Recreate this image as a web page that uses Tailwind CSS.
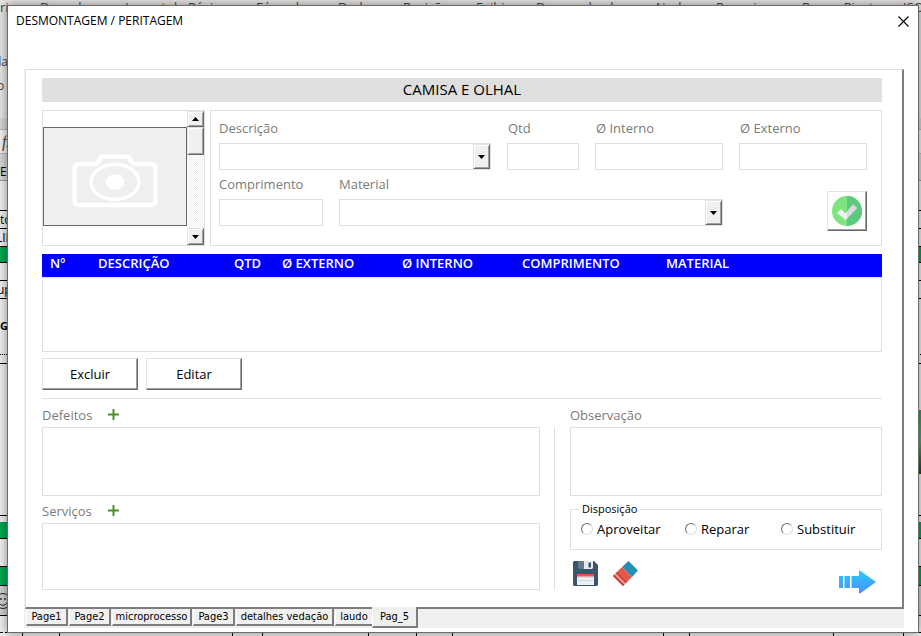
<!DOCTYPE html>
<html lang="pt-BR">
<head>
<meta charset="utf-8">
<title>DESMONTAGEM / PERITAGEM</title>
<script src="https://cdn.jsdelivr.net/npm/@tailwindcss/browser@4"></script>
</head>
<body class="relative min-h-screen overflow-hidden bg-[#f0f0f0] font-['Open_Sans','Noto_Sans',sans-serif] text-[13px] leading-[18px] text-black">

<!-- Spreadsheet behind the dialog -->
<div class="absolute inset-0 flex flex-col overflow-hidden text-[12px]" aria-hidden="true">
  <div class="h-[118px] shrink-0 bg-[#e6e5e4] text-[#444]">
    <div class="flex h-[50px] whitespace-nowrap text-[13px] leading-[14px]">
      <span class="w-10 shrink-0">rir</span>
      <span class="w-[85px] shrink-0">Desenhar</span>
      <span class="w-[131px] shrink-0">Layout da Página</span>
      <span class="w-[82px] shrink-0">Fórmulas</span>
      <span class="w-[65px] shrink-0">Dados</span>
      <span class="w-[73px] shrink-0">Revisão</span>
      <span class="w-[60px] shrink-0">Exibir</span>
      <span class="w-[118px] shrink-0">Desenvolvedor</span>
      <span class="w-[62px] shrink-0">Ajuda</span>
      <span class="w-[86px] shrink-0">Pesquisar</span>
      <span class="w-[101px] shrink-0">Power Pivot</span>
      <span>ISO</span>
    </div>
    <div class="flex h-6 leading-6"><span class="-ml-[6px]">da</span></div>
    <div class="flex h-6 leading-6"><span class="-ml-[3px]">o</span></div>
  </div>
  <div class="h-3 shrink-0 border-b border-[#b5b5b5] bg-[#d6d6d6]"></div>
  <div class="h-6 shrink-0 border-b border-[#b5b5b5] bg-[#f3f3f3] pl-[2px] font-['Liberation_Serif',serif] text-base leading-6 italic text-[#444]">fx</div>
  <div class="h-[27px] shrink-0 border-b border-[#999] bg-[#d8d8d8] pt-[9px]">E</div>
  <div class="h-[30px] shrink-0 border-b border-black"></div>
  <div class="h-[18px] shrink-0 border-b border-black leading-[17px]">to</div>
  <div class="flex h-[18px] shrink-0 border-b border-black leading-[17px]"><span class="-ml-1">LIN</span></div>
  <div class="h-4 shrink-0 border-b border-black bg-[#00a651]"></div>
  <div class="h-[18px] shrink-0 border-b border-black"></div>
  <div class="flex h-[18px] shrink-0 border-b border-black leading-[17px]"><span class="-ml-[3px]">up</span></div>
  <div class="h-14 shrink-0 border-b border-dotted border-black pt-[18px] text-[11px] font-bold">G</div>
  <div class="h-[9px] shrink-0 border-b border-black"></div>
  <div class="flex h-[152px] shrink-0 items-end justify-end border-b border-black pb-[41px]"><div class="h-16 w-1 bg-linear-to-b from-[#2f9e4f] via-[#3cb45f] to-[#0c4a22]"></div></div>
  <div class="h-[6px] shrink-0"></div>
  <div class="h-[17px] shrink-0 border-b border-black bg-[#00a651]"></div>
  <div class="h-7 shrink-0 border-b border-black"></div>
  <div class="h-[19px] shrink-0 border-b border-black bg-[#00a651]"></div>
  <div class="h-[30px] shrink-0 border-b border-black bg-[#d0d0d0] pt-[6px]">
    <svg class="-ml-[6px] h-[18px] w-[18px]" viewBox="0 0 18 18" fill="none" stroke="#222" stroke-width="1"><circle cx="9" cy="9" r="7.5"/><path d="M5 11c2 3 6 3 8 0"/><circle cx="7" cy="7" r=".6"/><circle cx="11" cy="7" r=".6"/></svg>
  </div>
  <div class="h-[17px] shrink-0 border-b border-dashed border-black"></div>
  <div class="flex h-1 shrink-0">
    <div class="w-[23px] border-r border-black"></div><div class="w-[37px] border-r border-black"></div><div class="w-[173px] border-r border-black"></div><div class="w-[30px] border-r border-black"></div><div class="w-[106px] border-r border-black"></div><div class="w-12 border-r border-black"></div><div class="w-[36px] border-r border-black"></div><div class="w-[211px] border-r border-black"></div><div class="w-[26px] border-r border-black"></div><div class="w-[144px] border-r border-black"></div><div class="w-[70px] border-r border-black"></div>
  </div>
</div>

<main role="dialog" aria-labelledby="dlg-title" class="relative mt-[5px] mr-[2px] ml-[7px] border border-[#6b6b6b] bg-white pb-1 shadow-[0_0_10px_rgba(0,0,0,0.45)]">
  <header class="flex h-[30px] items-center justify-between pr-[9px] pl-2">
    <h1 id="dlg-title" class="text-[12px]">DESMONTAGEM / PERITAGEM</h1>
    <button type="button" aria-label="Fechar" class="size-[11px]">
      <svg class="block size-[11px]" viewBox="0 0 11 11" stroke="#000" stroke-width="1.1"><path d="M.5.5l10 10M10.500.5l-10 10"/></svg>
    </button>
  </header>

  <div class="mt-[33px] mr-[14px] ml-4 bg-[#f0f0f0]">
    <section class="ml-px border-t border-r-2 border-b-2 border-l border-t-[#dfdfdf] border-r-[#7d7d7d] border-b-[#7d7d7d] border-l-[#dfdfdf] bg-white pt-2 pr-5 pb-[17px] pl-4">
      <h2 class="bg-[#dfdfdf] pb-[2px] text-center text-[15px] leading-[22px]">CAMISA E OLHAL</h2>

      <div class="mt-2 flex gap-[5px]">
        <div class="flex w-[163px] shrink-0 border border-[#dfdfdf]">
          <div class="w-36 pt-4">
            <div class="flex h-[99px] items-center justify-center border border-[#696969] bg-[#efefef]">
              <svg class="mt-2 h-[54px] w-[86px]" viewBox="0 0 86 54" fill="none" stroke="#fff">
                <path d="M7 10h15c3 0 4-1 5-3l1-2c0-2 2-2.500 4-2.500h22c2 0 4 .5 4 2.500l1 2c1 2 2 3 5 3h15c3 0 4.500 2 4.500 4.500v32c0 3-1.500 4.500-4.500 4.500H7c-3 0-4.500-1.500-4.500-4.500v-32C2.500 12 4 10 7 10z" stroke-width="4.500"/>
                <ellipse cx="43" cy="28" rx="24" ry="17.500" stroke-width="3.500"/>
                <ellipse cx="43" cy="28" rx="9.500" ry="7.500" fill="#fff" stroke="none"/>
              </svg>
            </div>
          </div>
          <div class="flex w-[17px] flex-col bg-[repeating-conic-gradient(#fff_0_25%,#f0f0f0_0_50%)] bg-[size:2px_2px]">
            <button type="button" aria-label="Rolar para cima" class="flex h-4 items-center justify-center border border-t-[#e3e3e3] border-r-[#696969] border-b-[#696969] border-l-[#e3e3e3] bg-[#f0f0f0] shadow-[inset_1px_1px_#fff,inset_-1px_-1px_#a0a0a0]"><svg class="h-1 w-[7px]" viewBox="0 0 7 4"><path d="M3.500 0L7 4H0z"/></svg></button>
            <div class="h-7 border border-t-[#e3e3e3] border-r-[#696969] border-b-[#696969] border-l-[#e3e3e3] bg-[#f0f0f0] shadow-[inset_1px_1px_#fff,inset_-1px_-1px_#a0a0a0]"></div>
            <div class="grow"></div>
            <button type="button" aria-label="Rolar para baixo" class="flex h-[17px] items-center justify-center border border-t-[#e3e3e3] border-r-[#696969] border-b-[#696969] border-l-[#e3e3e3] bg-[#f0f0f0] shadow-[inset_1px_1px_#fff,inset_-1px_-1px_#a0a0a0]"><svg class="h-1 w-[7px]" viewBox="0 0 7 4"><path d="M0 0h7L3.500 4z"/></svg></button>
          </div>
        </div>

        <div class="grow border border-[#dfdfdf] pt-2 pr-[14px] pb-[14px] pl-2 text-[#7b7b7b]">
          <div class="flex gap-4">
            <div class="grow">
              <label for="descricao" class="block">Descrição</label>
              <div class="relative mt-[6px]">
                <select id="descricao" class="block h-[27px] w-full appearance-none border border-[#dfdfdf] bg-white px-1 text-black"><option></option></select>
                <span class="pointer-events-none absolute top-px right-px flex h-[25px] w-[17px] items-center justify-center border border-t-[#e3e3e3] border-r-[#696969] border-b-[#696969] border-l-[#e3e3e3] bg-[#f0f0f0] shadow-[inset_1px_1px_#fff,inset_-1px_-1px_#a0a0a0]"><svg class="h-1 w-[7px]" viewBox="0 0 7 4"><path d="M0 0h7L3.500 4z"/></svg></span>
              </div>
            </div>
            <div class="w-[72px]">
              <label for="qtd" class="block pl-px">Qtd</label>
              <input id="qtd" type="text" class="mt-[6px] block h-[27px] w-full border border-[#dfdfdf] px-1 text-black">
            </div>
            <div class="w-32">
              <label for="interno" class="block pl-px">Ø Interno</label>
              <input id="interno" type="text" class="mt-[6px] block h-[27px] w-full border border-[#dfdfdf] px-1 text-black">
            </div>
            <div class="w-32">
              <label for="externo" class="block pl-px">Ø Externo</label>
              <input id="externo" type="text" class="mt-[6px] block h-[27px] w-full border border-[#dfdfdf] px-1 text-black">
            </div>
          </div>
          <div class="mt-[5px] flex gap-4">
            <div class="w-[104px]">
              <label for="comprimento" class="block">Comprimento</label>
              <input id="comprimento" type="text" class="mt-[6px] block h-[27px] w-full border border-[#dfdfdf] px-1 text-black">
            </div>
            <div class="grow">
              <label for="material" class="block">Material</label>
              <div class="relative mt-[6px]">
                <select id="material" class="block h-[27px] w-full appearance-none border border-[#dfdfdf] bg-white px-1 text-black"><option></option></select>
                <span class="pointer-events-none absolute top-px right-px flex h-[25px] w-[17px] items-center justify-center border border-t-[#e3e3e3] border-r-[#696969] border-b-[#696969] border-l-[#e3e3e3] bg-[#f0f0f0] shadow-[inset_1px_1px_#fff,inset_-1px_-1px_#a0a0a0]"><svg class="h-1 w-[7px]" viewBox="0 0 7 4"><path d="M0 0h7L3.500 4z"/></svg></span>
              </div>
            </div>
            <div class="flex w-32 justify-end pt-4">
              <button type="button" aria-label="Confirmar" class="flex size-10 items-center justify-center border border-t-[#e3e3e3] border-r-[#696969] border-b-[#696969] border-l-[#e3e3e3] bg-white shadow-[inset_-1px_-1px_#a0a0a0]">
                <svg class="size-[30px]" viewBox="0 0 30 30"><circle cx="15" cy="15" r="15" fill="#7ee57e"/><path d="M15 0a15 15 0 010 30z" fill="#5dc97f"/><path d="M5 17l4-4 4.500 4.500L21 8.500l4 3.500-11.500 12z" fill="#f1f0f5"/><path d="M15 15.700L21 8.500l4 3.500-10 10.400z" fill="#d9dade"/></svg>
              </button>
            </div>
          </div>
        </div>
      </div>

      <table class="mt-2 w-full table-fixed border-separate border-spacing-0 text-left">
        <colgroup><col class="w-12"><col class="w-[136px]"><col class="w-12"><col class="w-[120px]"><col class="w-[120px]"><col class="w-36"><col></colgroup>
        <thead class="bg-[#0000ff] text-white">
          <tr class="h-[23px]">
            <th class="p-0 pb-[5px] pl-2 font-semibold">Nº</th>
            <th class="p-0 pb-[5px] pl-2 font-semibold">DESCRIÇÃO</th>
            <th class="p-0 pb-[5px] pl-2 font-semibold">QTD</th>
            <th class="p-0 pb-[5px] pl-2 font-semibold">Ø EXTERNO</th>
            <th class="p-0 pb-[5px] pl-2 font-semibold">Ø INTERNO</th>
            <th class="p-0 pb-[5px] pl-2 font-semibold">COMPRIMENTO</th>
            <th class="p-0 pb-[5px] pl-2 font-semibold">MATERIAL</th>
          </tr>
        </thead>
        <tbody><tr><td colspan="7" class="h-[75px] border border-[#dfdfdf] p-0"></td></tr></tbody>
      </table>

      <div class="mt-[6px] flex gap-2">
        <button type="button" class="h-8 w-24 border border-t-[#e3e3e3] border-r-[#696969] border-b-[#696969] border-l-[#e3e3e3] bg-white shadow-[inset_-1px_-1px_#a0a0a0]">Excluir</button>
        <button type="button" class="h-8 w-24 border border-t-[#e3e3e3] border-r-[#696969] border-b-[#696969] border-l-[#e3e3e3] bg-white shadow-[inset_-1px_-1px_#a0a0a0]">Editar</button>
      </div>

      <hr class="mt-2 border-[#dfdfdf]">

      <div class="flex pt-[7px]">
        <div class="grow">
          <div class="flex h-[18px] items-center">
            <label for="defeitos" class="w-[66px] text-[#7b7b7b]">Defeitos</label>
            <button type="button" aria-label="Adicionar defeito" class="pb-[2px]"><svg class="block size-[11px]" viewBox="0 0 11 11" fill="#4f8f2f"><path d="M4.500 0h2v4.500H11v2H6.500V11h-2V6.500H0v-2h4.500z"/></svg></button>
          </div>
          <textarea id="defeitos" class="mt-[3px] block h-[69px] w-full resize-none border border-[#dfdfdf] p-1"></textarea>
          <div class="mt-[6px] flex h-[18px] items-center">
            <label for="servicos" class="w-[66px] text-[#7b7b7b]">Serviços</label>
            <button type="button" aria-label="Adicionar serviço" class="pb-[2px]"><svg class="block size-[11px]" viewBox="0 0 11 11" fill="#4f8f2f"><path d="M4.500 0h2v4.500H11v2H6.500V11h-2V6.500H0v-2h4.500z"/></svg></button>
          </div>
          <textarea id="servicos" class="mt-[3px] block h-[67px] w-full resize-none border border-[#dfdfdf] p-1"></textarea>
        </div>
        <div class="mt-[21px] mr-[15px] ml-[14px] w-px bg-[#dfdfdf]"></div>
        <div class="flex w-[312px] flex-col">
          <label for="observacao" class="block text-[#7b7b7b]">Observação</label>
          <textarea id="observacao" class="mt-[3px] block h-[69px] w-full resize-none border border-[#dfdfdf] p-1"></textarea>
          <fieldset class="mt-[6px] h-12 border border-[#dfdfdf] pl-[10px]">
            <legend class="-ml-[2px] px-[3px] text-[11px] leading-[14px]">Disposição</legend>
            <div class="flex h-[26px] items-center">
              <label class="flex w-[104px] items-center gap-1"><input type="radio" name="disposicao" class="size-3 appearance-none rounded-full border border-t-[#707070] border-r-[#dfdfdf] border-b-[#dfdfdf] border-l-[#707070] bg-white">Aproveitar</label>
              <label class="flex w-24 items-center gap-1"><input type="radio" name="disposicao" class="size-3 appearance-none rounded-full border border-t-[#707070] border-r-[#dfdfdf] border-b-[#dfdfdf] border-l-[#707070] bg-white">Reparar</label>
              <label class="flex items-center gap-1"><input type="radio" name="disposicao" class="size-3 appearance-none rounded-full border border-t-[#707070] border-r-[#dfdfdf] border-b-[#dfdfdf] border-l-[#707070] bg-white">Substituir</label>
            </div>
          </fieldset>
          <div class="mt-[11px] flex h-[29px] items-start gap-[15px] pr-[6px] pl-[3px]">
            <button type="button" aria-label="Salvar">
              <svg class="block size-[25px]" viewBox="0 0 25 25"><path d="M1 0h20l4 4v20l-1 1H1l-1-1V1z" fill="#3b556b"/><path d="M5 0h6v8H6L5 7z" fill="#64798a"/><path d="M11 0h9v7l-1 1h-8z" fill="#e6ebee"/><path d="M15.500 1.500h2.500v5h-2.500z" fill="#3b556b"/><path d="M4 13h17v2.500H4z" fill="#e0574c"/><path d="M4 15.500h17V24H4z" fill="#ebf0f1"/><path d="M4 15.500h17v1H4z" fill="#f3b1aa"/><path d="M5 19h15v1H5z" fill="#cfd8dc"/></svg>
            </button>
            <button type="button" aria-label="Limpar">
              <svg class="block size-[25px]" viewBox="0 0 25 25"><path d="M15.500 0L25 9.500 19 16 9 6z" fill="#2290b5"/><path d="M9 6l10 10-9 9L0 15z" fill="#e35a4d"/><path d="M0 15l10 10 1.500-1.500-10-10zM3 12l10 10 1-1L4 11z" fill="#c24438"/><path d="M1.500 13.500l10 10 1-1-10-10z" fill="#f0b0a8"/></svg>
            </button>
            <button type="button" aria-label="Avançar" class="mt-[9px] ml-auto">
              <svg class="block h-6 w-[38px]" viewBox="0 0 38 24"><defs><linearGradient id="arrow" gradientUnits="userSpaceOnUse" x1="0" y1="0" x2="0" y2="24"><stop offset="0" stop-color="#27cdfb"/><stop offset="1" stop-color="#4d8dff"/></linearGradient></defs><path fill="url(#arrow)" d="M1 6h4v12H1zM6.500 6h5.500v12H6.500zM13.500 6H21V1l1-.5L38 12 22 23.500l-1-.5v-5h-7.500z"/></svg>
            </button>
          </div>
        </div>
      </div>
    </section>

    <nav class="flex h-[19px] items-start pl-[2px] font-['DejaVu_Sans_Condensed','DejaVu_Sans',sans-serif] text-[11px] leading-4 whitespace-nowrap" aria-label="Páginas">
      <button type="button" class="mr-px h-[17px] w-[42px] border-r-2 border-b-2 border-l border-r-[#7d7d7d] border-b-[#7d7d7d] border-l-white">Page1</button>
      <button type="button" class="mr-px h-[17px] w-[42px] border-r-2 border-b-2 border-l border-r-[#7d7d7d] border-b-[#7d7d7d] border-l-white">Page2</button>
      <button type="button" class="mr-px h-[17px] w-20 border-r-2 border-b-2 border-l border-r-[#7d7d7d] border-b-[#7d7d7d] border-l-white">microprocesso</button>
      <button type="button" class="mr-px h-[17px] w-[42px] border-r-2 border-b-2 border-l border-r-[#7d7d7d] border-b-[#7d7d7d] border-l-white">Page3</button>
      <button type="button" class="mr-px h-[17px] w-[98px] border-r-2 border-b-2 border-l border-r-[#7d7d7d] border-b-[#7d7d7d] border-l-white">detalhes vedação</button>
      <button type="button" class="h-[17px] w-[37px] border-b-2 border-l border-b-[#7d7d7d] border-l-white">laudo</button>
      <button type="button" aria-current="page" class="relative -mt-[2px] h-[21px] w-[46px] border-r-2 border-b-2 border-l border-r-[#7d7d7d] border-b-[#7d7d7d] border-l-white bg-[#f0f0f0]">Pag_5</button>
    </nav>
  </div>
</main>
</body>
</html>
